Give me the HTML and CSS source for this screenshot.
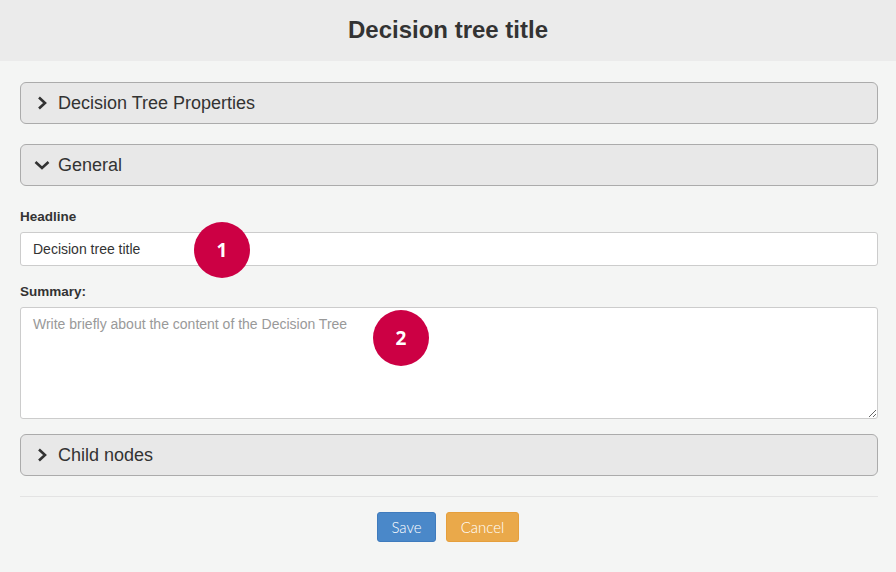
FILE: index.html
```html
<!DOCTYPE html>
<html>
<head>
<meta charset="utf-8">
<link rel="stylesheet" href="styles.css">
</head>
<body>
<header class="top"><h1>Decision tree title</h1></header>
<main class="content">
  <div class="panel">
    <svg class="chev" width="12" height="14" viewBox="0 0 12 14"><path d="M3 1.5 L9 7 L3 12.5" fill="none" stroke="#333" stroke-width="2.6"/></svg>
    <span>Decision Tree Properties</span>
  </div>
  <div class="panel">
    <svg class="chev down" width="16" height="12" viewBox="0 0 16 12"><path d="M1.5 3 L8 9 L14.5 3" fill="none" stroke="#333" stroke-width="2.6"/></svg>
    <span>General</span>
  </div>
  <label class="lbl first">Headline</label>
  <div class="field">
    <input class="input" type="text" value="Decision tree title">
    <span class="badge b1">1</span>
  </div>
  <label class="lbl">Summary:</label>
  <div class="field">
    <textarea class="area" placeholder="Write briefly about the content of the Decision Tree"></textarea>
    <span class="badge b2">2</span>
  </div>
  <div class="panel">
    <svg class="chev" width="12" height="14" viewBox="0 0 12 14"><path d="M3 1.5 L9 7 L3 12.5" fill="none" stroke="#333" stroke-width="2.6"/></svg>
    <span>Child nodes</span>
  </div>
  <hr class="sep">
  <div class="actions">
    <button class="btn save">Save</button>
    <button class="btn cancel">Cancel</button>
  </div>
</main>
</body>
</html>
```
FILE: styles.css
```css
* { box-sizing: border-box; }
html, body { margin: 0; padding: 0; }
body {
  background: #f4f5f4;
  font-family: "Liberation Sans", Arial, sans-serif;
  color: #333;
  width: 896px;
  height: 572px;
  overflow: hidden;
}
.top {
  height: 61px;
  background: #ebebeb;
  display: flex;
  align-items: center;
  justify-content: center;
}
.top h1 {
  margin: 0;
  font-size: 24px;
  font-weight: bold;
  color: #333;
  padding-bottom: 2px;
}
.content {
  padding: 21px 18px 0 20px;
}
.panel {
  height: 42px;
  border: 1px solid #ababab;
  border-radius: 6px;
  background: #e8e8e8;
  display: flex;
  align-items: center;
  font-size: 18px;
  color: #333;
  margin-bottom: 20px;
  padding-left: 15px;
}
.panel span { margin-left: 10px; }
.chev { display: block; }
.chev.down { margin-left: -2px; margin-right: -2px; }
.lbl {
  display: block;
  font-size: 13.5px;
  line-height: 16px;
  font-weight: bold;
  color: #333;
  margin: 0 0 7px 0;
}
.lbl.first { margin-top: 23px; }
.field { position: relative; }
.input {
  display: block;
  width: 100%;
  height: 34px;
  border: 1px solid #ccc;
  border-radius: 3px;
  background: #fff;
  font-family: "Liberation Sans", Arial, sans-serif;
  font-size: 14px;
  color: #333;
  padding: 0 12px;
  margin-bottom: 18px;
}
.area {
  display: block;
  width: 100%;
  height: 112px;
  border: 1px solid #ccc;
  border-radius: 3px;
  background: #fff;
  font-family: "Liberation Sans", Arial, sans-serif;
  font-size: 14px;
  color: #333;
  padding: 8px 12px;
  margin: 0 0 15px 0;
  resize: vertical;
}
.area::placeholder { color: #999; }
.badge {
  position: absolute;
  width: 56px;
  height: 56px;
  border-radius: 50%;
  background: #cc0044;
  color: #fff;
  font-family: "Open Sans", "Noto Sans", sans-serif;
  font-weight: bold;
  font-size: 19px;
  display: flex;
  align-items: center;
  justify-content: center;
}
.b1 { left: 174px; top: -10px; }
.b2 { left: 353px; top: 3px; }
.sep {
  border: 0;
  border-top: 1px solid #e3e3e3;
  margin: 0 0 15px 0;
}
.actions {
  display: flex;
  justify-content: center;
  gap: 10px;
  padding-right: 2px;
}
.btn {
  height: 30px;
  border-radius: 3px;
  font-family: "Lato", sans-serif;
  font-size: 15px;
  font-weight: 300;
  color: #fff;
  padding: 0 10px;
  border: 1px solid transparent;
}
.save { background: #4a88c9; border-color: #3f7bbd; width: 59px; }
.cancel { background: #eaa94a; border-color: #e69f3c; width: 73px; }
```
